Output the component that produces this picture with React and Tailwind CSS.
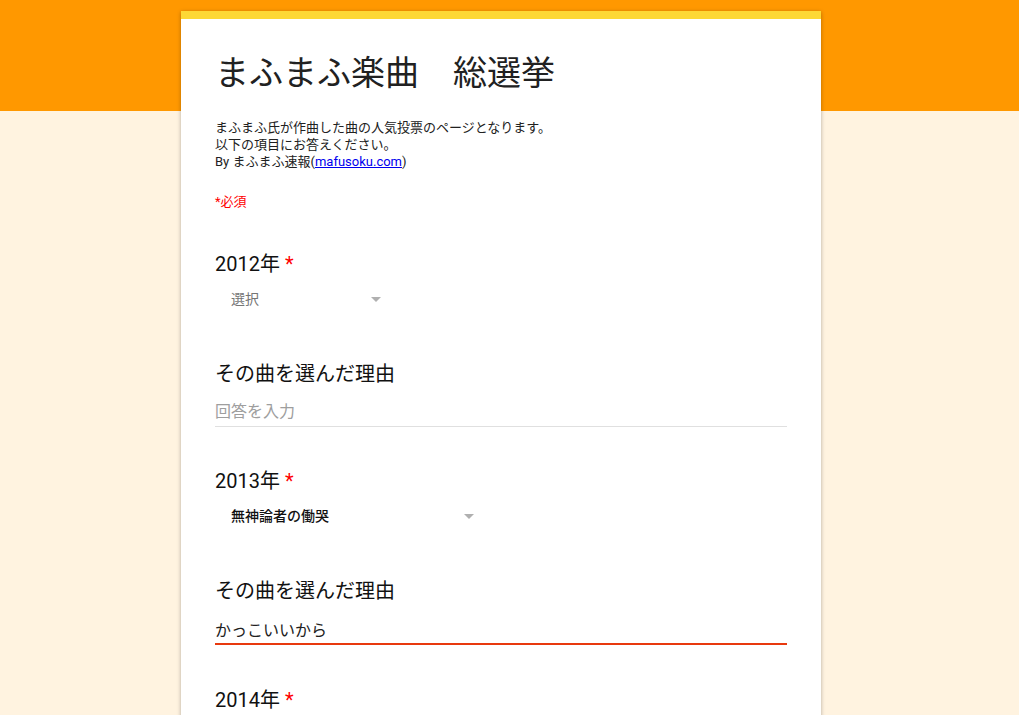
export default function App() {
  const font = { fontFamily: 'Roboto, "Noto Sans CJK JP", sans-serif' };

  return (
    <div
      style={font}
      className="min-h-screen bg-[linear-gradient(#ff9800_0,#ff9800_111px,#fff3e0_111px)] pt-[11px] pr-[17px] text-[#212121]"
    >
      <div className="mx-auto w-[640px] bg-white border-t-8 border-[#fdd835] shadow-[0_1px_4px_rgba(0,0,0,0.3)] px-[34px] pt-[34px] pb-10">
        {/* Title */}
        <h1 className="text-[34px] leading-[40px] font-normal text-[#212121] whitespace-pre">
          まふまふ楽曲　総選挙
        </h1>

        {/* Description */}
        <div className="mt-[26px] text-[13px] leading-[17px] text-[#212121]">
          <p>まふまふ氏が作曲した曲の人気投票のページとなります。</p>
          <p>以下の項目にお答えください。</p>
          <p>
            By まふまふ速報(
            <a href="#" className="text-[#0000ee] underline">mafusoku.com</a>)
          </p>
        </div>

        <p className="mt-[23px] text-[13px] leading-[17px] text-[#ff0000]">*必須</p>

        {/* 2012 */}
        <Question label="2012年" required className="mt-[42px]" />
        <Select value="選択" placeholder width="w-[174px]" />

        <Question label="その曲を選んだ理由" className="mt-[47px]" />
        <div className="mt-[14px] pb-[2px] border-b border-[#e0e0e0] text-[16px] leading-[24px] text-[#9e9e9e]">
          回答を入力
        </div>

        {/* 2013 */}
        <Question label="2013年" required className="mt-[42px]" />
        <Select value="無神論者の働哭" width="w-[267px]" />

        <Question label="その曲を選んだ理由" className="mt-[47px]" />
        <div className="mt-[16px] border-b-2 border-[#e8390e] text-[16px] leading-[24px] text-[#212121]">
          かっこいいから
        </div>

        {/* 2014 */}
        <Question label="2014年" required className="mt-[43px]" />
      </div>
    </div>
  );
}

function Question({ label, required, className = '' }) {
  return (
    <div className={`text-[20px] leading-[24px] text-[#111] ${className}`}>
      {label}
      {required && <span className="text-[#ff0000] ml-[5px]">*</span>}
    </div>
  );
}

function Select({ value, placeholder, width }) {
  return (
    <div className={`mt-[7px] h-[32px] flex items-center justify-between pl-4 pr-2 ${width}`}>
      <span className={`text-[14px] ${placeholder ? 'text-[#757575]' : 'text-[#111] font-medium'}`}>
        {value}
      </span>
      <svg width="10" height="5" viewBox="0 0 10 5">
        <path d="M0 0h10L5 5z" fill="#b0b0b0" />
      </svg>
    </div>
  );
}
